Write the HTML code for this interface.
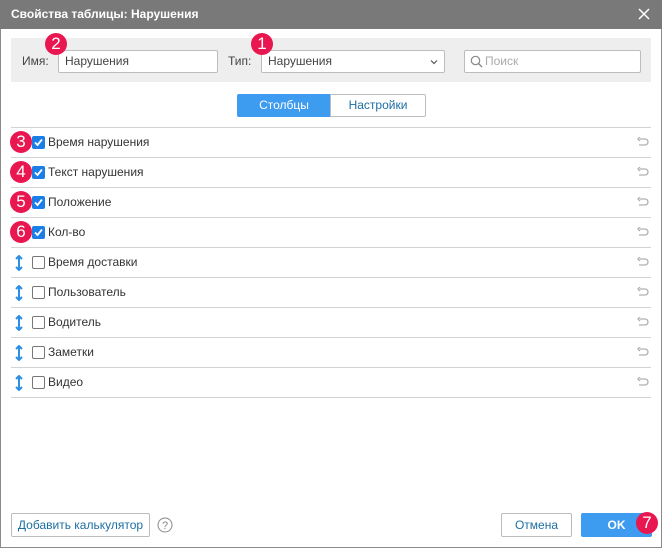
<!DOCTYPE html>
<html><head><meta charset="utf-8"><style>
*{box-sizing:border-box;margin:0;padding:0}
body{width:662px;height:548px;background:#fff;font-family:"Liberation Sans",Arial,sans-serif;font-size:12px;color:#333;position:relative;overflow:hidden}
.dlg{position:absolute;left:0;top:0;width:662px;height:548px;border:1px solid #8a8a8a;border-top:none}
.hdr{position:absolute;left:0;top:0;width:662px;height:29px;background:#797979;color:#fff;font-size:12px;font-weight:bold;line-height:29px;padding-left:11px}
.x{position:absolute;right:12px;top:8px}
.panel{position:absolute;left:11px;top:38px;width:640px;height:44px;background:#eeeeee}
.lbl{position:absolute;top:54px;font-size:12px;color:#444}
.inp{position:absolute;top:50px;height:23px;border:1px solid #bdbdbd;border-radius:2px;background:#fff;font-size:12px;line-height:21px;padding-left:6px;color:#444}
.badge{position:absolute;width:22px;height:22px;border-radius:50%;background:#e8174f;color:#fff;font-size:17px;line-height:22px;text-align:center}
.tab{position:absolute;top:94px;height:23px;line-height:21px;text-align:center;font-size:12px}
.row{position:absolute;left:11px;width:640px;height:30px;border-bottom:1px solid #d3d3d3;line-height:29px}
.row .t{position:absolute;left:37px;top:0;font-size:12px;color:#333}
.cb{position:absolute;left:21px;top:8px;width:13px;height:13px;border:1px solid #777;border-radius:2px;background:#fff}
.cb.on{background:#1a7ee6;border-color:#1a7ee6}
.arr{position:absolute;left:3px;top:7px}
.undo{position:absolute;right:2px;top:9px}
.btn{position:absolute;top:513px;height:24px;border:1px solid #bcbcbc;border-radius:2px;background:#fff;color:#1c6ea4;line-height:22px;text-align:center;font-size:12px}
</style></head><body>
<div class="dlg"></div>
<div class="hdr">Свойства таблицы: Нарушения<svg class="x" width="12" height="12"><path d="M1 1 11 11M11 1 1 11" stroke="#fff" stroke-width="1.5"/></svg></div>
<div class="panel"></div>
<span class="lbl" style="left:22px">Имя:</span>
<div class="inp" style="left:58px;width:160px">Нарушения</div>
<span class="lbl" style="left:228px">Тип:</span>
<div class="inp" style="left:261px;width:184px">Нарушения<svg style="position:absolute;right:6px;top:8px" width="8" height="6"><path d="M1 1.5 4 4.5 7 1.5" stroke="#555" fill="none" stroke-width="1.2"/></svg></div>
<div class="inp" style="left:464px;width:177px;color:#aaa;padding-left:20px"><svg style="position:absolute;left:5px;top:4px" width="13" height="13"><circle cx="5.5" cy="5.5" r="4.2" stroke="#888" fill="none" stroke-width="1.2"/><path d="M8.5 8.5 12 12" stroke="#888" stroke-width="1.3"/></svg>Поиск</div>
<div class="badge" style="left:45px;top:33px">2</div>
<div class="badge" style="left:251px;top:33px">1</div>
<div class="tab" style="left:237px;width:94px;background:#3d9bf0;color:#fff;border:1px solid #3d9bf0;border-radius:2px 0 0 2px">Столбцы</div>
<div class="tab" style="left:330px;width:96px;background:#fff;color:#1c6ea4;border:1px solid #bcbcbc;border-radius:0 2px 2px 0">Настройки</div>
<div style="position:absolute;left:11px;top:127px;width:640px;border-top:1px solid #d3d3d3"></div>
<div id="rows"></div>
<div class="btn" style="left:11px;width:139px">Добавить калькулятор</div>
<svg style="position:absolute;left:157px;top:517px" width="16" height="16"><circle cx="8" cy="8" r="7" stroke="#888" fill="none"/><text x="8" y="12" font-size="11" text-anchor="middle" fill="#888" font-family="Liberation Sans">?</text></svg>
<div class="btn" style="left:501px;width:71px">Отмена</div>
<div class="btn" style="left:581px;width:71px;background:#3d9bf0;border-color:#3d9bf0;color:#fff;font-weight:bold">OK</div>
<div class="badge" style="left:636px;top:512px">7</div>
<script>
var items=[["Время нарушения",1,"3"],["Текст нарушения",1,"4"],["Положение",1,"5"],["Кол-во",1,"6"],["Время доставки",0],["Пользователь",0],["Водитель",0],["Заметки",0],["Видео",0]];
var h="";
items.forEach(function(it,i){var y=128+i*30;
h+='<div class="row" style="top:'+y+'px">';
if(!it[1])h+='<svg class="arr" width="10" height="16"><path d="M5 1v14M2 4l3-3 3 3M2 12l3 3 3-3" stroke="#2b8fe8" stroke-width="2" fill="none"/></svg>';
h+='<div class="cb'+(it[1]?' on':'')+'">'+(it[1]?'<svg width="11" height="11" style="position:absolute;left:0;top:0"><path d="M2 5.5 4.5 8 9 2.5" stroke="#fff" stroke-width="1.8" fill="none"/></svg>':'')+'</div>';
h+='<span class="t">'+it[0]+'</span>';
h+='<svg class="undo" width="12" height="10"><path d="M3 2h5a3 3 0 0 1 0 6H2M3 0 1 2l2 2" stroke="#b0b0b0" stroke-width="1.3" fill="none"/></svg>';
h+='</div>';
if(it[2])h+='<div class="badge" style="left:10px;top:'+(y+3)+'px">'+it[2]+'</div>';
});
document.getElementById("rows").innerHTML=h;
</script>
</body></html>
